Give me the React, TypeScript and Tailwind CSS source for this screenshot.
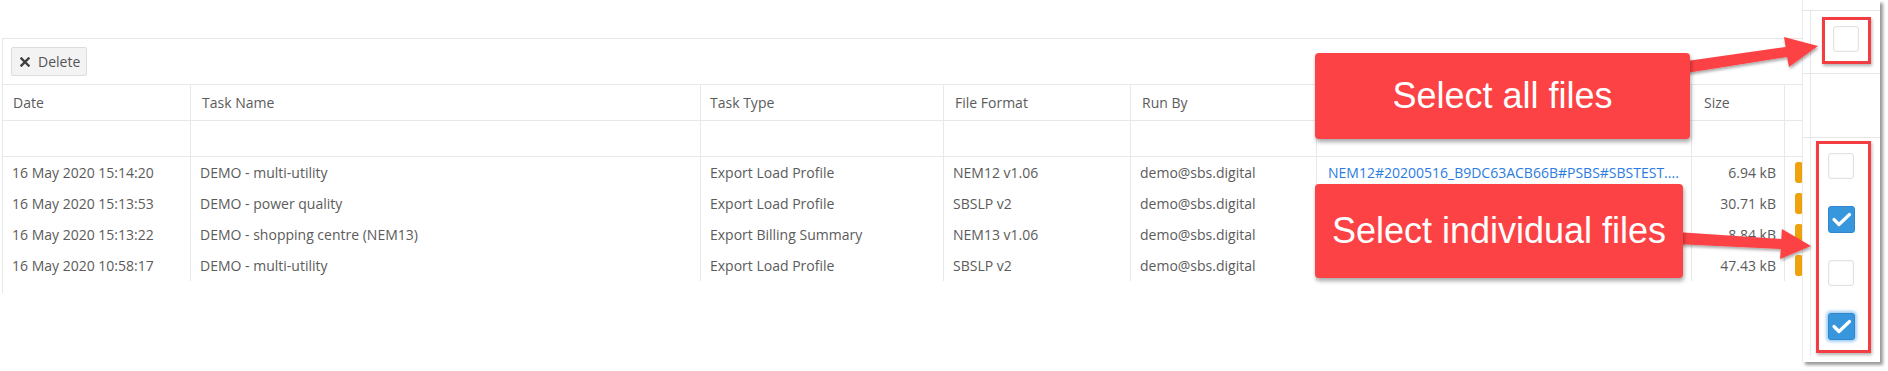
import React from "react";

type Row = {
  date: string;
  name: string;
  type: string;
  fmt: string;
  by: string;
  file: string;
  size: string;
};

const rows: Row[] = [
  {
    date: "16 May 2020 15:14:20",
    name: "DEMO - multi-utility",
    type: "Export Load Profile",
    fmt: "NEM12 v1.06",
    by: "demo@sbs.digital",
    file: "NEM12#20200516_B9DC63ACB66B#PSBS#SBSTEST....",
    size: "6.94 kB",
  },
  {
    date: "16 May 2020 15:13:53",
    name: "DEMO - power quality",
    type: "Export Load Profile",
    fmt: "SBSLP v2",
    by: "demo@sbs.digital",
    file: "",
    size: "30.71 kB",
  },
  {
    date: "16 May 2020 15:13:22",
    name: "DEMO - shopping centre (NEM13)",
    type: "Export Billing Summary",
    fmt: "NEM13 v1.06",
    by: "demo@sbs.digital",
    file: "",
    size: "8.84 kB",
  },
  {
    date: "16 May 2020 10:58:17",
    name: "DEMO - multi-utility",
    type: "Export Load Profile",
    fmt: "SBSLP v2",
    by: "demo@sbs.digital",
    file: "",
    size: "47.43 kB",
  },
];

const grid =
  "grid grid-cols-[188px_510px_243px_187px_186px_375px_93px_1fr]";
const cell =
  "border-r border-[#e8e8e8] pl-[9px] pr-[8px] flex items-center whitespace-nowrap overflow-hidden";

function Check({ checked, glow }: { checked?: boolean; glow?: boolean }) {
  if (!checked) {
    return (
      <div className="w-[26px] h-[26px] rounded-[3px] border border-[#e2e2e2] bg-white shadow-[inset_0_0_2px_rgba(0,0,0,0.08)]" />
    );
  }
  return (
    <div
      className={
        "w-[27px] h-[27px] rounded-[3px] bg-[#3897dc] border border-[#2f88cf] flex items-center justify-center " +
        (glow ? "shadow-[0_0_3px_2px_rgba(90,165,230,0.55)]" : "")
      }
    >
      <svg width="25" height="25" viewBox="0 0 25 25">
        <path
          d="M5 12.5 L10 17.5 L20.5 7.5"
          fill="none"
          stroke="#ffffff"
          strokeWidth="3.2"
          strokeLinecap="round"
          strokeLinejoin="round"
        />
      </svg>
    </div>
  );
}

export default function App() {
  return (
    <div className="relative w-[1888px] h-[371px] bg-white overflow-hidden font-['Open_Sans',sans-serif] text-[14px] text-[#5b5b5b]">
      {/* Table card */}
      <div className="mt-[38px] ml-[2px] w-[1810px] border-l border-t border-[#e6e6e6]">
        {/* Toolbar */}
        <div className="h-[46px] border-b border-[#e8e8e8] flex items-center pl-[8px]">
          <button className="h-[29px] w-[76px] rounded-[2px] border border-[#dddddd] bg-[#f3f3f3] flex items-center pl-[8px] gap-[8px] text-[14px] text-[#555]">
            <svg width="10" height="10" viewBox="0 0 10 10">
              <path
                d="M1.5 1.5 L8.5 8.5 M8.5 1.5 L1.5 8.5"
                stroke="#3f3f3f"
                strokeWidth="2.4"
                strokeLinecap="square"
              />
            </svg>
            <span>Delete</span>
          </button>
        </div>
        {/* Header */}
        <div className={grid + " h-[36px] border-b border-[#e8e8e8]"}>
          <div className={cell + " pl-[10px]"}>Date</div>
          <div className={cell + " pl-[11px]"}>Task Name</div>
          <div className={cell}>Task Type</div>
          <div className={cell + " pl-[11px]"}>File Format</div>
          <div className={cell + " pl-[11px]"}>Run By</div>
          <div className={cell} />
          <div className={cell + " pl-[12px]"}>Size</div>
          <div className={cell} />
        </div>
        {/* Filter row */}
        <div className={grid + " h-[36px] border-b border-[#e8e8e8]"}>
          <div className={cell} />
          <div className={cell} />
          <div className={cell} />
          <div className={cell} />
          <div className={cell} />
          <div className={cell} />
          <div className={cell} />
          <div className={cell} />
        </div>
        {/* Data rows */}
        {rows.map((r, i) => (
          <div key={i} className={grid + " h-[31px]"}>
            <div className={cell}>{r.date}</div>
            <div className={cell}>{r.name}</div>
            <div className={cell}>{r.type}</div>
            <div className={cell}>{r.fmt}</div>
            <div className={cell}>{r.by}</div>
            <div className={cell + " pl-[11px] text-[#2b7be4]"}>{r.file}</div>
            <div className={cell + " justify-end"}>{r.size}</div>
            <div className={cell + " pl-[10px]"}>
              <div className="w-[20px] h-[21px] rounded-[3px] bg-[#eea20c]" />
            </div>
          </div>
        ))}
        <div className="h-[12px]" />
      </div>

      {/* Magnified checkbox panel */}
      <div className="absolute left-[1802px] top-0 w-[78px] h-[362px] bg-white border-l border-[#ececec] shadow-[3px_3px_3px_rgba(0,0,0,0.4)] flex flex-col">
        <div className="h-[10px]" />
        <div className="h-[64px] border-t border-b border-[#e6e6e6] flex">
          <div className="w-[8px] border-r border-[#e6e6e6]" />
          <div className="flex-1 pl-[22px] pt-[15px]">
            <Check />
          </div>
        </div>
        <div className="h-[64px] border-b border-[#e6e6e6] flex">
          <div className="w-[8px] border-r border-[#e6e6e6]" />
        </div>
        <div className="flex-1 flex">
          <div className="w-[8px] border-r border-[#ececec] mb-[6px]" />
          <div className="flex-1 pl-[17px] pt-[15px] flex flex-col gap-[27px]">
            <Check />
            <Check checked />
            <Check />
            <Check checked glow />
          </div>
        </div>
      </div>

      {/* Red highlight boxes */}
      <div className="absolute left-[1822px] top-[17px] w-[49px] h-[47px] border-[3px] border-[#f23e42] shadow-[1px_2px_3px_rgba(0,0,0,0.3)]" />
      <div className="absolute left-[1816px] top-[141px] w-[55px] h-[212px] border-[3px] border-[#f23e42] shadow-[1px_2px_3px_rgba(0,0,0,0.3)]" />

      {/* Arrows */}
      <svg
        className="absolute left-0 top-0 pointer-events-none"
        width="1888"
        height="371"
        viewBox="0 0 1888 371"
      >
        <defs>
          <filter id="ash" x="-10%" y="-50%" width="120%" height="200%">
            <feDropShadow dx="1" dy="2" stdDeviation="1.5" floodColor="#000" floodOpacity="0.35" />
          </filter>
        </defs>
        <polygon
          points="1680,62 1785.6,47 1784,37 1818,46 1789,67 1787,57 1680,74"
          fill="#fd4245"
          filter="url(#ash)"
        />
        <polygon
          points="1676,232 1781.3,239.1 1781.9,229.1 1811,246 1780.1,259.1 1780.7,249.1 1676,244"
          fill="#fd4245"
          filter="url(#ash)"
        />
      </svg>

      {/* Callouts */}
      <div className="absolute left-[1315px] top-[53px] w-[375px] h-[86px] rounded-[4px] bg-[#fd4245] shadow-[1px_3px_4px_rgba(0,0,0,0.35)] flex items-center justify-center font-['Liberation_Sans',Arial,sans-serif] text-[36px] text-white">
        Select all files
      </div>
      <div className="absolute left-[1315px] top-[184px] w-[368px] h-[94px] rounded-[4px] bg-[#fd4245] shadow-[1px_3px_4px_rgba(0,0,0,0.35)] flex items-center justify-center font-['Liberation_Sans',Arial,sans-serif] text-[36px] text-white">
        Select individual files
      </div>
    </div>
  );
}
